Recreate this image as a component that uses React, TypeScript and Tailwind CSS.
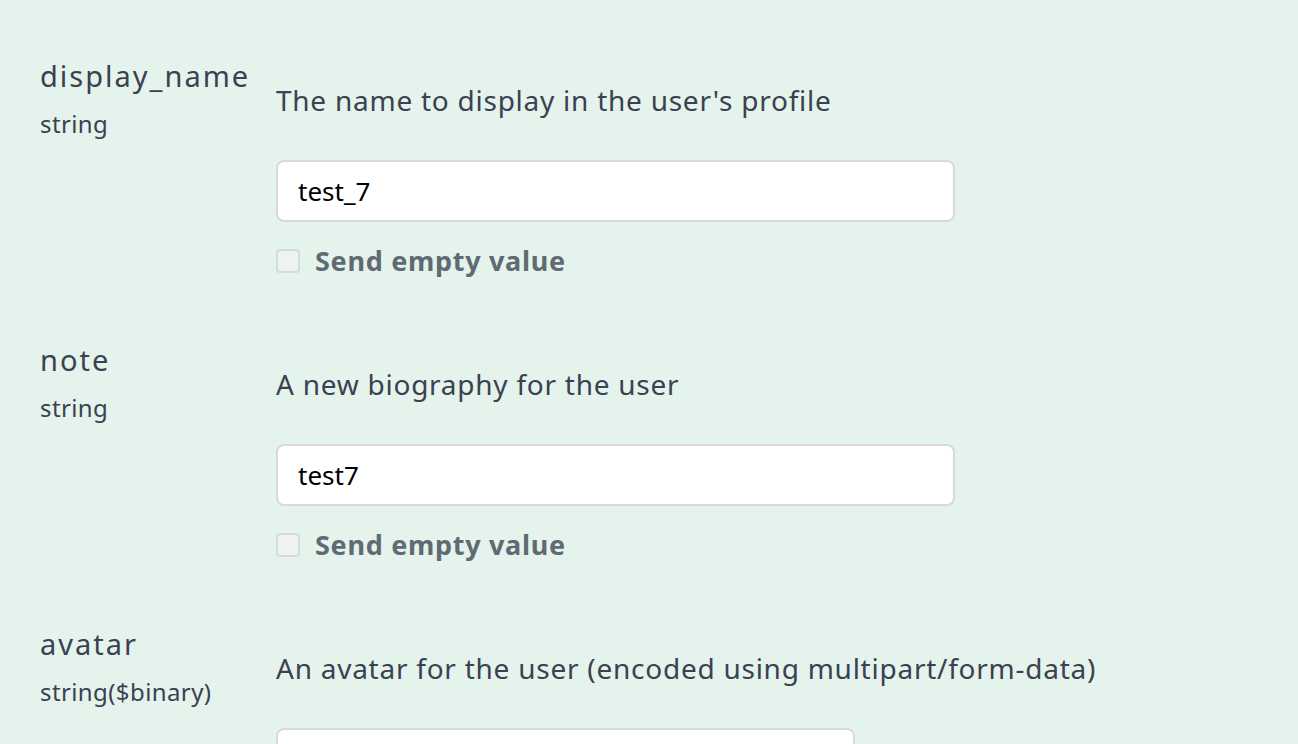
type Param = {
  name: string;
  type: string;
  description: string;
  value?: string;
  file?: boolean;
};

const params: Param[] = [
  {
    name: "display_name",
    type: "string",
    description: "The name to display in the user's profile",
    value: "test_7",
  },
  {
    name: "note",
    type: "string",
    description: "A new biography for the user",
    value: "test7",
  },
  {
    name: "avatar",
    type: "string($binary)",
    description: "An avatar for the user (encoded using multipart/form-data)",
    file: true,
  },
];

function ParamRow({ param }: { param: Param }) {
  return (
    <div className="flex items-start pb-[63px]">
      <div className="w-[236px] shrink-0">
        <div className="text-[29px] leading-[36px] tracking-[2px] text-[#3b4151]">{param.name}</div>
        <div className="mt-[15px] text-[24px] leading-[30px] tracking-[0.4px] text-[#3b4151]">{param.type}</div>
      </div>
      <div className="flex flex-col pt-[24px]">
        <p className="text-[28px] leading-[36px] tracking-[0.75px] text-[#3b4151]">{param.description}</p>
        {param.file ? (
          <div className="mt-[42px] h-[62px] w-[579px] rounded-[8px] border-2 border-[#d9d9d9] bg-white" />
        ) : (
          <>
            <input
              readOnly
              value={param.value}
              className="mt-[42px] h-[62px] w-[679px] rounded-[8px] border-2 border-[#d9d9d9] bg-white pl-[20px] text-[26px] text-black outline-none"
            />
            <label className="mt-[21px] flex h-[36px] items-center gap-[15px]">
              <span className="block h-[24px] w-[24px] rounded-[4px] border-2 border-[#d6dad8] bg-[#eef3f0]" />
              <span className="text-[27px] font-bold leading-[36px] tracking-[0.7px] text-[#5f6a72]">
                Send empty value
              </span>
            </label>
          </>
        )}
      </div>
    </div>
  );
}

export default function App() {
  return (
    <div
      className="min-h-screen bg-[#e4f3ec] pl-[40px] pt-[58px]"
      style={{ fontFamily: '"Noto Sans", "Liberation Sans", Arial, sans-serif' }}
    >
      {params.map((p) => (
        <ParamRow key={p.name} param={p} />
      ))}
    </div>
  );
}
